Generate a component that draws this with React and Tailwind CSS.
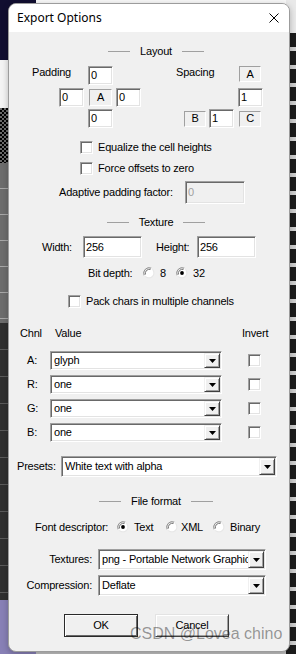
import React from "react";

const SUNKEN =
  "bg-white border border-t-[#a0a0a0] border-l-[#a0a0a0] border-b-white border-r-white shadow-[inset_1px_1px_0_#696969,inset_-1px_-1px_0_#e3e3e3]";
const SUNKEN_DIS =
  "bg-[#f0f0f0] text-[#a0a0a0] border border-t-[#a0a0a0] border-l-[#a0a0a0] border-b-white border-r-white shadow-[inset_1px_1px_0_#696969,inset_-1px_-1px_0_#e3e3e3]";

function Field({ className = "", children }) {
  return (
    <div className={`${SUNKEN} shrink-0 flex items-center pl-[2px] ${className}`}>
      {children}
    </div>
  );
}

function Static({ className = "", children }) {
  return (
    <div
      className={`shrink-0 bg-[#f0f0f0] border border-t-[#a0a0a0] border-l-[#a0a0a0] border-b-white border-r-white flex items-center justify-center ${className}`}
    >
      {children}
    </div>
  );
}

function Checkbox({ className = "" }) {
  return <div className={`${SUNKEN} w-[13px] h-[13px] shrink-0 ${className}`} />;
}

function Radio({ checked }) {
  return (
    <svg width="12" height="12" viewBox="0 0 12 12" className="shrink-0">
      <circle cx="6" cy="6" r="5.5" fill="#e8e8e8" />
      <path d="M1.2 8.5 A5.5 5.5 0 0 1 8.5 1.2" fill="none" stroke="#8a8a8a" strokeWidth="1" />
      <path d="M8.5 1.2 A5.5 5.5 0 0 1 1.2 8.5" fill="none" stroke="#ffffff" strokeWidth="1" />
      <circle cx="6" cy="6" r="4.3" fill="#fff" />
      <path d="M2.4 7.5 A4.2 4.2 0 0 1 7.5 2.4" fill="none" stroke="#606060" strokeWidth="0.9" />
      {checked && <circle cx="6" cy="6" r="1.9" fill="#000" />}
    </svg>
  );
}

function DropBtn() {
  return (
    <div className="w-[16px] shrink-0 self-stretch bg-[#f0f0f0] border border-t-[#f0f0f0] border-l-[#f0f0f0] border-b-[#404040] border-r-[#404040] shadow-[inset_1px_1px_0_#fff,inset_-1px_-1px_0_#a0a0a0] flex items-center justify-center">
      <svg width="7" height="4" viewBox="0 0 7 4">
        <path d="M0 0h7L3.5 4z" fill="#000" />
      </svg>
    </div>
  );
}

function Select({ className = "", value }) {
  return (
    <div className={`${SUNKEN} shrink-0 flex items-stretch p-px ${className}`}>
      <div className="flex-1 min-w-0 overflow-hidden whitespace-nowrap flex items-center pl-[2px]">
        {value}
      </div>
      <DropBtn />
    </div>
  );
}

function Header({ label, className = "" }) {
  return (
    <div className={`h-[14px] ml-[47px] w-[200px] flex items-center justify-center gap-[10px] ${className}`}>
      <div className="w-[22px] h-px bg-[#a0a0a0]" />
      <span>{label}</span>
      <div className="w-[22px] h-px bg-[#a0a0a0]" />
    </div>
  );
}

function ChannelRow({ ch, value, first }) {
  return (
    <div className={`${first ? "mt-[11px]" : "mt-[5px]"} h-[19px] flex items-center`}>
      <span className="ml-[18px] w-[23px]">{ch}:</span>
      <Select className="w-[172px] h-[19px]" value={value} />
      <Checkbox className="ml-[26px]" />
    </div>
  );
}

export default function App() {
  return (
    <div className="relative w-[296px] h-[654px] overflow-hidden bg-[#f7f7f7] flex font-['Liberation_Sans',Arial,sans-serif] text-[11px] tracking-[-0.2px] text-black leading-[13px]">
      {/* desktop behind the dialog */}
      <div className="w-[36px] h-full flex flex-col">
        <div className="h-[60px] bg-[#110e30]" />
        <div className="h-[48px] bg-[#f4f4f4]" />
        <div className="h-[55px] bg-[repeating-conic-gradient(#000_0%_25%,#6a6a6a_0%_50%)] bg-[length:4px_4px]" />
        <div className="h-[160px] bg-[repeating-linear-gradient(to_bottom,#6d6d6d_0px,#6d6d6d_25px,#a8a8a8_25px,#a8a8a8_26px)]" />
        <div className="h-[277px] bg-[repeating-linear-gradient(to_bottom,#2f2f2f_0px,#2f2f2f_26px,#5a5a5a_26px,#5a5a5a_27px)]" />
        <div className="flex-1 bg-[#8880b6]" />
      </div>
      <div className="flex-1 h-full flex flex-col">
        <div className="flex-1" />
        <div className="h-[8px] bg-[#c4c4c4]" />
      </div>
      <div className="w-[10px] h-full flex flex-col">
        <div className="h-[33px] bg-[#e9e9e9]" />
        <div className="flex-1 bg-[repeating-linear-gradient(to_bottom,#1c1c1c_0px,#1c1c1c_14px,#d0d0d0_14px,#d0d0d0_18px)]" />
      </div>

      {/* dialog window */}
      <div className="absolute left-[8px] top-[3px] w-[282px] h-[649px] rounded-[8px] border border-[#9c9c9c] bg-[#f0f0f0] overflow-hidden flex flex-col shadow-[0_2px_6px_rgba(0,0,0,0.25)]">
        <div className="h-[28px] shrink-0 bg-white flex items-center justify-between pl-[8px] pr-[10px]">
          <span className="font-['Noto_Sans',sans-serif] text-[12px] tracking-normal leading-[16px] text-black">
            Export Options
          </span>
          <svg width="10" height="10" viewBox="0 0 10 10">
            <path d="M0.5 0.5L9.5 9.5M9.5 0.5L0.5 9.5" stroke="#000" strokeWidth="1" />
          </svg>
        </div>

        <Header label="Layout" className="mt-[12px]" />

        <div className="mt-[8px] h-[19px] flex items-center">
          <span className="ml-[23px] w-[56px] self-start">Padding</span>
          <Field className="w-[25px] h-[19px]">0</Field>
          <span className="ml-[63px] w-[63px] self-start">Spacing</span>
          <Static className="w-[22px] h-[16px] self-start">A</Static>
        </div>

        <div className="mt-[3px] h-[19px] flex items-center">
          <Field className="ml-[50px] w-[25px] h-[19px]">0</Field>
          <Static className="ml-[5px] w-[23px] h-[17px]">A</Static>
          <Field className="ml-[4px] w-[25px] h-[19px]">0</Field>
          <Field className="ml-[97px] w-[25px] h-[19px]">1</Field>
        </div>

        <div className="mt-[2px] h-[19px] flex items-center">
          <Field className="ml-[79px] w-[25px] h-[19px]">0</Field>
          <Static className="ml-[71px] w-[22px] h-[16px]">B</Static>
          <Field className="ml-[3px] w-[25px] h-[19px]">1</Field>
          <Static className="ml-[5px] w-[22px] h-[16px]">C</Static>
        </div>

        <div className="mt-[13px] h-[13px] flex items-center">
          <Checkbox className="ml-[71px]" />
          <span className="ml-[5px]">Equalize the cell heights</span>
        </div>

        <div className="mt-[8px] h-[13px] flex items-center">
          <Checkbox className="ml-[71px]" />
          <span className="ml-[5px]">Force offsets to zero</span>
        </div>

        <div className="mt-[6px] h-[23px] flex items-center">
          <span className="ml-[50px] w-[126px]">Adaptive padding factor:</span>
          <div className={`${SUNKEN_DIS} w-[60px] h-[23px] flex items-center pl-[2px]`}>0</div>
        </div>

        <Header label="Texture" className="mt-[11px]" />

        <div className="mt-[7px] h-[22px] flex items-center">
          <span className="ml-[33px] w-[41px]">Width:</span>
          <Field className="w-[59px] h-[22px]">256</Field>
          <span className="ml-[14px] w-[41px]">Height:</span>
          <Field className="w-[59px] h-[22px]">256</Field>
        </div>

        <div className="mt-[8px] h-[14px] flex items-center">
          <span className="ml-[79px] w-[55px]">Bit depth:</span>
          <Radio />
          <span className="ml-[5px] w-[16px]">8</span>
          <Radio checked />
          <span className="ml-[5px]">32</span>
        </div>

        <div className="mt-[15px] h-[13px] flex items-center">
          <Checkbox className="ml-[59px]" />
          <span className="ml-[5px]">Pack chars in multiple channels</span>
        </div>

        <div className="mt-[18px] h-[14px] flex items-center">
          <span className="ml-[11px] w-[35px]">Chnl</span>
          <span className="w-[187px]">Value</span>
          <span>Invert</span>
        </div>

        <ChannelRow ch="A" value="glyph" first />
        <ChannelRow ch="R" value="one" />
        <ChannelRow ch="G" value="one" />
        <ChannelRow ch="B" value="one" />

        <div className="mt-[14px] h-[21px] flex items-center">
          <span className="ml-[8px] w-[44px]">Presets:</span>
          <Select className="w-[216px] h-[21px]" value="White text with alpha" />
        </div>

        <Header label="File format" className="mt-[17px]" />

        <div className="mt-[12px] h-[14px] flex items-center">
          <span className="ml-[26px] w-[82px]">Font descriptor:</span>
          <Radio checked />
          <span className="ml-[5px] w-[32px]">Text</span>
          <Radio />
          <span className="ml-[3px] w-[32px]">XML</span>
          <Radio />
          <span className="ml-[5px]">Binary</span>
        </div>

        <div className="mt-[15px] h-[21px] flex items-center">
          <span className="w-[83px] text-right">Textures:</span>
          <Select className="ml-[6px] w-[168px] h-[21px]" value="png - Portable Network Graphics" />
        </div>

        <div className="mt-[5px] h-[21px] flex items-center">
          <span className="w-[83px] text-right">Compression:</span>
          <Select className="ml-[6px] w-[168px] h-[21px]" value="Deflate" />
        </div>

        <div className="mt-[18px] h-[23px] flex items-center">
          <div className="ml-[55px] w-[74px] h-[23px] border border-[#2a2a2a] bg-[#f0f0f0] shadow-[inset_1px_1px_0_#fff,inset_-1px_-1px_0_#696969] flex items-center justify-center">
            OK
          </div>
          <div className="ml-[17px] w-[74px] h-[23px] bg-[#f0f0f0] border border-t-[#e3e3e3] border-l-[#e3e3e3] border-b-[#404040] border-r-[#404040] shadow-[inset_1px_1px_0_#fff,inset_-1px_-1px_0_#a0a0a0] flex items-center justify-center">
            Cancel
          </div>
        </div>
      </div>

      {/* watermark */}
      <div className="absolute left-[130px] top-[624px] text-[16px] tracking-normal leading-[20px] text-[rgba(0,0,0,0.4)] font-['Liberation_Sans',Arial,sans-serif] whitespace-nowrap">
        CSDN @Lovea chino
      </div>
    </div>
  );
}
